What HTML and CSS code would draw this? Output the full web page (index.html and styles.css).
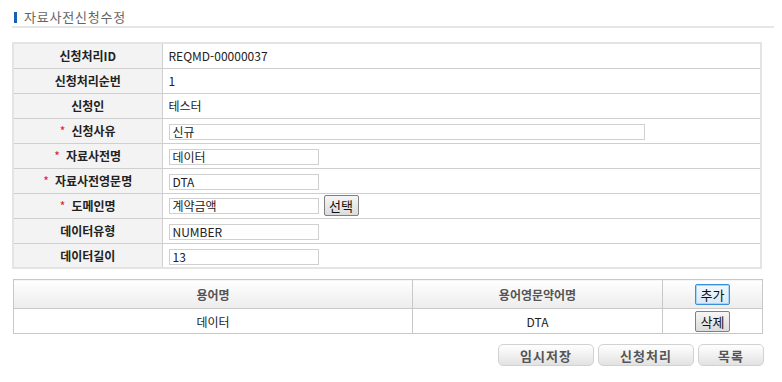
FILE: index.html
```html
<!DOCTYPE html>
<html lang="ko">
<head>
<meta charset="utf-8">
<link rel="stylesheet" href="styles.css">
</head>
<body>
<div class="page">
  <h2 class="title"><span class="title-bar"></span>자료사전신청수정</h2>

  <table class="form">
    <tr><th>신청처리ID</th><td>REQMD-00000037</td></tr>
    <tr><th>신청처리순번</th><td>1</td></tr>
    <tr><th>신청인</th><td>테스터</td></tr>
    <tr><th><span class="req">*</span>신청사유</th><td><input class="inp wide" value="신규"></td></tr>
    <tr><th><span class="req">*</span>자료사전명</th><td><input class="inp" value="데이터"></td></tr>
    <tr><th><span class="req">*</span>자료사전영문명</th><td><input class="inp" value="DTA"></td></tr>
    <tr><th><span class="req">*</span>도메인명</th><td><input class="inp" value="계약금액"><button class="btn-sm sel">선택</button></td></tr>
    <tr><th>데이터유형</th><td><input class="inp" value="NUMBER"></td></tr>
    <tr><th>데이터길이</th><td><input class="inp" value="13"></td></tr>
  </table>

  <table class="list">
    <tr class="head"><th class="c1">용어명</th><th class="c2">용어영문약어명</th><th class="c3"><button class="btn-sm focus">추가</button></th></tr>
    <tr><td>데이터</td><td>DTA</td><td><button class="btn-sm">삭제</button></td></tr>
  </table>

  <div class="actions">
    <button class="btn-lg w96">임시저장</button>
    <button class="btn-lg w96">신청처리</button>
    <button class="btn-lg w66">목록</button>
  </div>
</div>
</body>
</html>
```

FILE: styles.css
```css
* { box-sizing: border-box; }
body {
  margin: 0;
  background: #fff;
  font-family: "Noto Sans CJK KR", "Noto Sans", sans-serif;
  font-size: 12px;
  color: #222;
}
.page {
  padding: 9px 0 0 12px;
  width: 774px;
}
.title {
  margin: 0;
  display: flex;
  align-items: center;
  font-size: 13px;
  font-weight: normal;
  color: #666;
  letter-spacing: 0.8px;
  height: 16px;
  line-height: 16px;
  padding-left: 2px;
  border-bottom: 2px solid #e6e6e6;
  box-sizing: content-box;
  padding-bottom: 1px;
}
.title-bar {
  display: inline-block;
  width: 3px;
  height: 11px;
  background: #1a5fb4;
  margin-right: 7px;
}
.form {
  margin-top: 14px;
  width: 750px;
  border-collapse: collapse;
  border: 2px solid #e4e4e4;
}
.form th, .form td {
  height: 25px;
  padding: 0;
  border-bottom: 1px solid #cfcfcf;
}
.form tr:last-child th, .form tr:last-child td { border-bottom: none; }
.form th {
  width: 149px;
  background: #f3f3f3;
  border-right: 1px solid #cfcfcf;
  font-weight: bold;
  color: #222;
  text-align: center;
}
.form td {
  padding-left: 6px;
  background: #fff;
}
.req {
  color: #e02020;
  margin-right: 6px;
  font-weight: normal;
}
.inp {
  width: 150px;
  height: 16px;
  border: 1px solid #d0d0d0;
  padding: 0 3px;
  font-family: inherit;
  font-size: 12px;
  color: #222;
  vertical-align: middle;
  outline: none;
}
.inp.wide { width: 476px; }
.btn-sm {
  width: 35px;
  height: 21px;
  padding: 0;
  border: 1px solid #808080;
  border-radius: 2px;
  background: linear-gradient(#f6f6f6, #dcdcdc);
  font-family: inherit;
  font-size: 13px;
  color: #111;
  vertical-align: middle;
}
.btn-sm.sel { margin-left: 5px; }
.btn-sm.focus {
  border: 1px solid #3a8fd8;
  box-shadow: inset 0 0 0 1px #a8d4f5;
  background: linear-gradient(#f2f8fd, #d9e9f6);
}
.list {
  margin-top: 10px;
  margin-left: 1px;
  width: 750px;
  border-collapse: collapse;
  border: 1px solid #c8c8c8;
}
.list th, .list td {
  border: 1px solid #c8c8c8;
  text-align: center;
  padding: 0;
}
.list .head th {
  height: 29px;
  background: linear-gradient(#ffffff, #ececec);
  font-weight: bold;
  color: #555;
}
.list td { height: 25px; color: #222; }
.list .c1 { width: 399px; }
.list .c2 { width: 250px; }
.actions {
  display: flex;
  justify-content: flex-end;
  gap: 4px;
  margin-top: 10px;
  width: 752px;
}
.btn-lg {
  height: 22px;
  padding: 0;
  border: 1px solid #d2d2d2;
  border-radius: 5px;
  background: linear-gradient(#ffffff 0%, #f2f2f2 45%, #e2e2e2 100%);
  font-family: inherit;
  font-size: 13px;
  font-weight: bold;
  color: #555;
  letter-spacing: 1px;
}
.w96 { width: 96px; }
.w66 { width: 66px; }
```
